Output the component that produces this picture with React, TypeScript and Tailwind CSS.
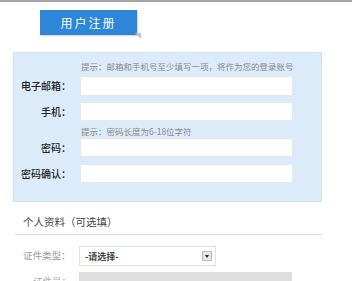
const font = { fontFamily: '"Noto Sans CJK SC", "Noto Sans", sans-serif' };

const Field = ({ label, top = "mt-[6px]", h = "h-[20px]" }: { label: string; top?: string; h?: string }) => (
  <div className={`flex items-center ${top}`}>
    <div className="w-[57px] text-right text-[10px] font-medium text-[#222] leading-none whitespace-nowrap">{label}</div>
    <div className={`ml-[9px] w-[213px] ${h} bg-white border border-[#e4e9ee]`} />
  </div>
);

const Hint = ({ children, className = "" }: { children: string; className?: string }) => (
  <div className={`ml-[67px] text-[8.5px] leading-[12px] text-[#8a8a8a] whitespace-nowrap ${className}`}>{children}</div>
);

export default function App() {
  return (
    <div className="w-[352px] h-[281px] overflow-hidden bg-white border-t-2 border-[#a5a5a5]" style={font}>
      <div className="ml-[40px] mt-[8px] relative w-[97px] h-[25px] bg-[#2d86d8] flex items-center justify-center shadow-[1px_1px_1px_rgba(0,0,0,0.15)]">
        <span className="text-white text-[12px] tracking-[2px] leading-none">用户注册</span>
        <div className="absolute right-[-4px] bottom-[-4px] w-0 h-0 border-l-[6px] border-l-transparent border-t-[6px] border-t-[#b9c6d2]" />
      </div>
      <div className="ml-[13px] mt-[17px] w-[309px] h-[150px] bg-[#dcebf9] border border-[#cfe2f4] pt-[7px]">
        <Hint className="mb-[4px]">提示：邮箱和手机号至少填写一项，将作为您的登录账号</Hint>
        <Field label="电子邮箱：" top="" />
        <Field label="手机：" h="h-[19px]" />
        <Hint className="mt-[4px]">提示：密码长度为6-18位字符</Hint>
        <Field label="密码：" top="mt-[1px]" h="h-[19px]" />
        <Field label="密码确认：" top="mt-[7px]" h="h-[19px]" />
      </div>
      <div className="ml-[23px] mt-[13px] text-[10.5px] leading-[14px] text-[#444]">个人资料（可选填）</div>
      <div className="ml-[15px] mt-[5px] w-[307px] h-px bg-[#dcdcdc]" />
      <div className="flex items-center mt-[11px]">
        <div className="ml-[23px] w-[46px] text-[9.5px] text-[#999] leading-none whitespace-nowrap">证件类型：</div>
        <div className="ml-[10px] w-[137px] h-[20px] bg-white border border-[#e2e2e2] flex items-center justify-between pl-[5px] pr-[3px]">
          <span className="text-[9px] font-bold text-[#444] leading-none">-请选择-</span>
          <div className="w-[10px] h-[10px] bg-[#e6e6e6] border border-[#bbb] flex items-center justify-center">
            <div className="w-0 h-0 border-l-[2.5px] border-l-transparent border-r-[2.5px] border-r-transparent border-t-[3px] border-t-[#222]" />
          </div>
        </div>
      </div>
      <div className="flex items-start mt-[6px]">
        <div className="ml-[33px] w-[36px] text-[9.5px] text-[#aaa] leading-none mt-[5px] whitespace-nowrap">证件号：</div>
        <div className="ml-[10px] w-[213px] h-[20px] bg-[#dedede]" />
      </div>
    </div>
  );
}
